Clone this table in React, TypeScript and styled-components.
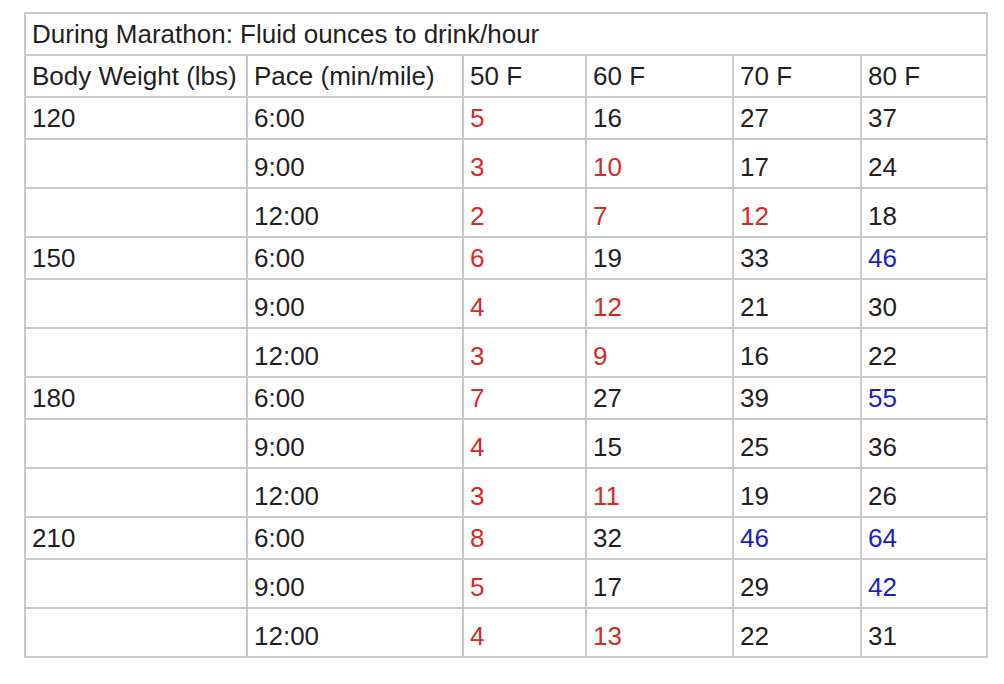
import React from 'react'
import styled, { createGlobalStyle } from 'styled-components'

type Tone = 'plain' | 'red' | 'blue'

interface Entry {
  value: string
  tone?: Tone
}

interface Row {
  weight?: string
  pace: string
  values: Entry[]
}

const r = (value: string): Entry => ({ value, tone: 'red' })
const b = (value: string): Entry => ({ value, tone: 'blue' })
const p = (value: string): Entry => ({ value })

const rows: Row[] = [
  { weight: '120', pace: '6:00', values: [r('5'), p('16'), p('27'), p('37')] },
  { pace: '9:00', values: [r('3'), r('10'), p('17'), p('24')] },
  { pace: '12:00', values: [r('2'), r('7'), r('12'), p('18')] },
  { weight: '150', pace: '6:00', values: [r('6'), p('19'), p('33'), b('46')] },
  { pace: '9:00', values: [r('4'), r('12'), p('21'), p('30')] },
  { pace: '12:00', values: [r('3'), r('9'), p('16'), p('22')] },
  { weight: '180', pace: '6:00', values: [r('7'), p('27'), p('39'), b('55')] },
  { pace: '9:00', values: [r('4'), p('15'), p('25'), p('36')] },
  { pace: '12:00', values: [r('3'), r('11'), p('19'), p('26')] },
  { weight: '210', pace: '6:00', values: [r('8'), p('32'), b('46'), b('64')] },
  { pace: '9:00', values: [r('5'), p('17'), p('29'), b('42')] },
  { pace: '12:00', values: [r('4'), r('13'), p('22'), p('31')] }
]

const columnWidths = [222, 216, 123, 147, 128, 126]
const temperatures = ['50 F', '60 F', '70 F', '80 F']

const toneColors: Record<Tone, string> = {
  plain: '#1f1f1f',
  red: '#d42a2a',
  blue: '#1d1dc8'
}

const GlobalStyle = createGlobalStyle`
  html, body {
    margin: 0;
    padding: 0;
    background: #ffffff;
  }
`

const Page = styled.div`
  padding: 12px 16px 0 24px;
  font-family: "Liberation Sans", Arial, sans-serif;
`

const Table = styled.table`
  border-collapse: collapse;
  table-layout: fixed;
  width: 962px;
  border: 2px solid #c9c9c9;
`

const Cell = styled.td<{ $tall?: boolean, $tone?: Tone }>`
  border: 2px solid #c9c9c9;
  padding: ${props => (props.$tall ? '12px' : '5px')} 6px 5px 6px;
  font-size: 26px;
  line-height: 30px;
  color: ${props => toneColors[props.$tone || 'plain']};
  vertical-align: bottom;
  white-space: nowrap;
  overflow: hidden;
`

const App = () => {
  return (
    <Page>
      <GlobalStyle />
      <Table>
        <colgroup>
          {columnWidths.map((width, index) => (
            <col key={index} style={{ width }} />
          ))}
        </colgroup>
        <tbody>
          <tr>
            <Cell colSpan={6}>During Marathon: Fluid ounces to drink/hour</Cell>
          </tr>
          <tr>
            <Cell>Body Weight (lbs)</Cell>
            <Cell>Pace (min/mile)</Cell>
            {temperatures.map(temp => (
              <Cell key={temp}>{temp}</Cell>
            ))}
          </tr>
          {rows.map((row, index) => {
            const tall = !row.weight
            return (
              <tr key={index}>
                <Cell $tall={tall}>{row.weight || ''}</Cell>
                <Cell $tall={tall}>{row.pace}</Cell>
                {row.values.map((entry, col) => (
                  <Cell key={col} $tall={tall} $tone={entry.tone}>
                    {entry.value}
                  </Cell>
                ))}
              </tr>
            )
          })}
        </tbody>
      </Table>
    </Page>
  )
}

export default App
